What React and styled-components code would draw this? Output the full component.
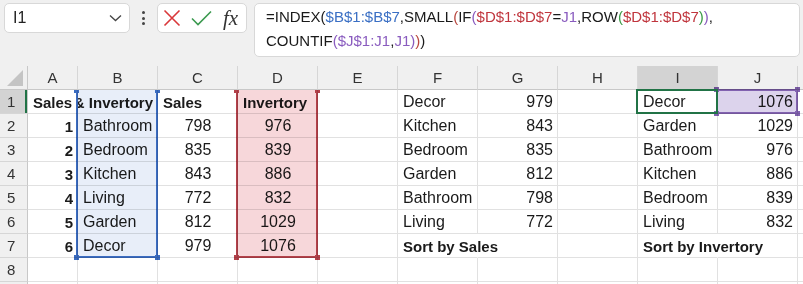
import React from 'react';
import styled, { createGlobalStyle } from 'styled-components';

const GlobalStyle = createGlobalStyle`
  * { box-sizing: border-box; }
  html, body { margin: 0; padding: 0; background: #fff; overflow: hidden; }
  body { font-family: "Liberation Sans", Arial, sans-serif; }
`;

const INK = '#1a1a1a';
const BLUE = '#3a6fc4';
const RED = '#c0353d';
const PURPLE = '#8a5cbf';
const GREEN = '#3a9a46';
const BROWN = '#b8473f';

const Page = styled.div`
  width: 803px;
  height: 284px;
  overflow: hidden;
  background: #fff;
`;

const FormulaBar = styled.div`
  height: 66px;
  background: #f0f0f0;
  display: flex;
  align-items: flex-start;
  padding: 3px 0 0 4px;
`;

const NameBox = styled.div`
  width: 126px;
  height: 30px;
  background: #fff;
  border: 1px solid #d8d8d8;
  border-radius: 5px;
  display: flex;
  align-items: center;
  justify-content: space-between;
  padding: 0 7px 0 8px;
  font-size: 16px;
  color: #222;
`;

const Dots = styled.div`
  width: 27px;
  height: 30px;
  display: flex;
  flex-direction: column;
  align-items: center;
  justify-content: center;
  gap: 2.5px;

  span {
    width: 3px;
    height: 3px;
    border-radius: 50%;
    background: #444;
  }
`;

const ActionBox = styled.div`
  width: 90px;
  height: 30px;
  background: #fff;
  border: 1px solid #d8d8d8;
  border-radius: 5px;
  display: flex;
  align-items: center;
  padding: 0 0 0 5px;
  gap: 10px;
`;

const Fx = styled.span`
  font-family: "Liberation Serif", "Times New Roman", serif;
  font-style: italic;
  font-size: 21px;
  color: #333;
  margin-left: 1px;
  line-height: 1;
`;

const FormulaBox = styled.div`
  margin-left: 7px;
  width: 546px;
  height: 54px;
  background: #fff;
  border: 1px solid #d8d8d8;
  border-radius: 5px;
  padding: 1px 0 0 11px;
  font-size: 15px;
  line-height: 24px;
  color: ${INK};
  white-space: nowrap;
`;

const Tok = styled.span`
  color: ${p => p.$color};
`;

const Sheet = styled.div`
  display: grid;
  grid-template-columns: 28px 50px repeat(11, 80px);
  grid-template-rows: repeat(10, 24px);
`;

const Corner = styled.div`
  grid-row: 1;
  grid-column: 1;
  background: #f0f0f0;
  border-right: 1px solid #c8c8c8;
  border-bottom: 1px solid #c8c8c8;
  display: flex;
  align-items: flex-end;
  justify-content: flex-end;
  padding: 0 4px 3px 0;
`;

const ColHead = styled.div`
  grid-row: 1;
  grid-column: ${p => p.$c};
  background: ${p => (p.$active ? '#d3d3d3' : '#f0f0f0')};
  border-right: 1px solid #d6d6d6;
  border-bottom: 1px solid #c8c8c8;
  display: flex;
  align-items: center;
  justify-content: center;
  font-size: 15px;
  color: #333;
`;

const RowHead = styled.div`
  grid-row: ${p => p.$r};
  grid-column: 1;
  background: ${p => (p.$active ? '#d3d3d3' : '#f0f0f0')};
  border-right: 1px solid #c8c8c8;
  border-bottom: 1px solid #d6d6d6;
  box-shadow: ${p => (p.$active ? 'inset -2px 0 0 #217346' : 'none')};
  display: flex;
  align-items: center;
  padding-left: 7px;
  font-size: 15px;
  color: #333;
`;

const Cell = styled.div`
  grid-row: ${p => p.$r};
  grid-column: ${p => p.$c};
  border-right: 1px solid ${p => (p.$spill ? 'transparent' : '#e1e1e1')};
  border-bottom: 1px solid #e1e1e1;
  padding: 1px 4px 0 5px;
  display: flex;
  align-items: center;
  justify-content: ${p => p.$align};
  font-size: ${p => (p.$bold ? '15px' : '16px')};
  font-weight: ${p => (p.$bold ? 700 : 400)};
  color: ${INK};
  white-space: nowrap;
  overflow: ${p => (p.$spill ? 'visible' : 'hidden')};
  position: relative;
  z-index: ${p => (p.$spill ? 1 : 0)};
`;

const RangeBox = styled.div`
  grid-column: ${p => p.$c};
  grid-row: ${p => p.$r1} / ${p => p.$r2 + 1};
  margin-left: -2px;
  margin-top: ${p => (p.$top ? '-1px' : '0')};
  border: 2px solid ${p => p.$color};
  border-top-width: ${p => (p.$top ? '2px' : '0')};
  background: ${p => p.$fill};
  mix-blend-mode: multiply;
  position: relative;
  z-index: 2;
`;

const ActiveBox = styled.div`
  grid-column: ${p => p.$c};
  grid-row: ${p => p.$r};
  margin: -1px 0 0 -2px;
  border: 2px solid #217346;
  position: relative;
  z-index: 3;
`;

const Handle = styled.span`
  position: absolute;
  width: 5px;
  height: ${p => (p.$short ? '3px' : '5px')};
  background: ${p => p.$color};
  ${p => (p.$x === 'l' ? 'left: -4px;' : 'right: -4px;')}
  ${p => (p.$y === 't' ? (p.$short ? 'top: 0;' : 'top: -4px;') : 'bottom: -4px;')}
`;

const COLS = ['A', 'B', 'C', 'D', 'E', 'F', 'G', 'H', 'I', 'J', 'K'];
const CENTER_COLS = ['C', 'D'];

const b = v => ({ v, bold: true });

const DATA = [
  { A: b('Sales'), B: { v: 'Sales & Invertory', bold: true, align: 'flex-end' }, C: b('Sales'), D: b('Invertory'), F: 'Decor', G: 979, I: 'Decor', J: 1076 },
  { A: b(1), B: 'Bathroom', C: 798, D: 976, F: 'Kitchen', G: 843, I: 'Garden', J: 1029 },
  { A: b(2), B: 'Bedroom', C: 835, D: 839, F: 'Bedroom', G: 835, I: 'Bathroom', J: 976 },
  { A: b(3), B: 'Kitchen', C: 843, D: 886, F: 'Garden', G: 812, I: 'Kitchen', J: 886 },
  { A: b(4), B: 'Living', C: 772, D: 832, F: 'Bathroom', G: 798, I: 'Bedroom', J: 839 },
  { A: b(5), B: 'Garden', C: 812, D: 1029, F: 'Living', G: 772, I: 'Living', J: 832 },
  { A: b(6), B: 'Decor', C: 979, D: 1076, F: { v: 'Sort by Sales', bold: true, spill: true }, I: { v: 'Sort by Invertory', bold: true, spill: true } },
  {},
  {},
];

const FORMULA = [
  [['=INDEX(', INK], ['$B$1:$B$7', BLUE], [',SMALL', INK], ['(', BROWN], ['IF', INK], ['(', PURPLE], ['$D$1:$D$7', RED], ['=', INK], ['J1', PURPLE], [',ROW', INK], ['(', GREEN], ['$D$1:$D$7', RED], [')', GREEN], [')', PURPLE], [',', INK]],
  [['COUNTIF', INK], ['(', PURPLE], ['$J$1:J1', PURPLE], [',', INK], ['J1', PURPLE], [')', PURPLE], [')', BROWN], [')', INK]],
];

const col = letter => COLS.indexOf(letter) + 2;

function renderCell(raw, letter, r) {
  const entry = raw && typeof raw === 'object' ? raw : raw === undefined ? null : { v: raw };
  const value = entry ? entry.v : '';
  const numeric = typeof value === 'number';
  let align = 'flex-start';
  if (numeric) align = CENTER_COLS.includes(letter) ? 'center' : 'flex-end';
  if (entry && entry.align) align = entry.align;
  return (
    <Cell
      key={letter + r}
      $r={r + 1}
      $c={col(letter)}
      $align={align}
      $bold={entry && entry.bold}
      $spill={entry && entry.spill}
    >
      {value}
    </Cell>
  );
}

function Range({ letter, r1, r2, color, fill, top }) {
  return (
    <RangeBox $c={col(letter)} $r1={r1 + 1} $r2={r2 + 1} $color={color} $fill={fill} $top={top}>
      <Handle $x="l" $y="t" $short={!top} $color={color} />
      <Handle $x="r" $y="t" $short={!top} $color={color} />
      <Handle $x="l" $y="b" $color={color} />
      <Handle $x="r" $y="b" $color={color} />
    </RangeBox>
  );
}

export default function App() {
  return (
    <Page>
      <GlobalStyle />
      <FormulaBar>
        <NameBox>
          I1
          <svg width="13" height="8" viewBox="0 0 13 8">
            <path d="M1 1.5 L6.5 6.5 L12 1.5" fill="none" stroke="#444" strokeWidth="1.3" />
          </svg>
        </NameBox>
        <Dots>
          <span />
          <span />
          <span />
        </Dots>
        <ActionBox>
          <svg width="18" height="18" viewBox="0 0 18 18">
            <path d="M1.5 1.5 L16.5 16.5 M16.5 1.5 L1.5 16.5" stroke="#d9383a" strokeWidth="1.6" fill="none" />
          </svg>
          <svg width="21" height="16" viewBox="0 0 21 16">
            <path d="M1 8.5 L7 14.5 L20 1.5" stroke="#3c9a50" strokeWidth="1.6" fill="none" />
          </svg>
          <Fx>fx</Fx>
        </ActionBox>
        <FormulaBox>
          {FORMULA.map((line, i) => (
            <div key={i}>
              {line.map(([t, c], j) => (
                <Tok key={j} $color={c}>{t}</Tok>
              ))}
            </div>
          ))}
        </FormulaBox>
      </FormulaBar>

      <Sheet>
        <Corner>
          <svg width="16" height="16" viewBox="0 0 16 16">
            <polygon points="16,0 16,16 0,16" fill="#c4c4c4" />
          </svg>
        </Corner>
        {COLS.map(letter => (
          <ColHead key={letter} $c={col(letter)} $active={letter === 'I'}>
            {letter}
          </ColHead>
        ))}
        {DATA.map((row, i) => (
          <React.Fragment key={i}>
            <RowHead $r={i + 2} $active={i === 0}>{i + 1}</RowHead>
            {COLS.map(letter => renderCell(row[letter], letter, i + 1))}
          </React.Fragment>
        ))}

        <Range letter="B" r1={1} r2={7} color="#3b6cc1" fill="#e8eef9" />
        <Range letter="D" r1={1} r2={7} color="#b4414a" fill="#f7d7da" />
        <Range letter="J" r1={1} r2={1} color="#8262b0" fill="#dcd3ec" top />
        <ActiveBox $c={col('I')} $r={2} />
      </Sheet>
    </Page>
  );
}
